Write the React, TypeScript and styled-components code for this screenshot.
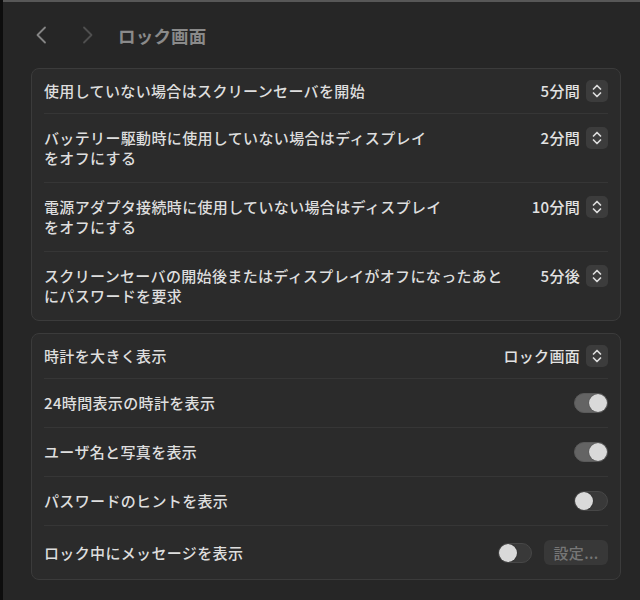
import React from "react";
import styled, { createGlobalStyle } from "styled-components";

const Global = createGlobalStyle`
  html, body {
    margin: 0;
    padding: 0;
    background: #262626;
    height: 100%;
  }
  #root {
    min-height: 100%;
  }
  * { box-sizing: border-box; }
`;

const FONT = `"Noto Sans CJK JP", "Noto Sans", "Liberation Sans", sans-serif`;

const Window = styled.div`
  display: flex;
  width: 640px;
  height: 600px;
  background: #262626;
  font-family: ${FONT};
  overflow: hidden;
`;

const SideEdge = styled.div`
  width: 3px;
  flex: none;
  background: #0d0d0d;
`;

const Main = styled.div`
  flex: 1;
  display: flex;
  flex-direction: column;
  border-top: 2px solid #575757;
  padding: 0 19px 0 28px;
`;

const Header = styled.div`
  height: 66px;
  display: flex;
  align-items: center;
  padding-left: 4px;
`;

const NavButton = styled.span<{ $dim?: boolean }>`
  display: flex;
  align-items: center;
  justify-content: center;
  width: 12px;
  height: 18px;
  color: ${(p) => (p.$dim ? "#4f4f4f" : "#858585")};
  margin-right: ${(p) => (p.$dim ? "24px" : "35px")};
`;

const Title = styled.h1`
  margin: 0;
  font-size: 17.5px;
  font-weight: 700;
  color: #8a8a8a;
  letter-spacing: 0.2px;
`;

const Cards = styled.div`
  display: flex;
  flex-direction: column;
  gap: 12px;
`;

const Card = styled.section`
  background: #2b2b2b;
  border: 1px solid #3b3b3b;
  border-radius: 8px;
  display: flex;
  flex-direction: column;
`;

const Separator = styled.div`
  height: 1px;
  margin: 0 12px;
  background: #363636;
`;

const Row = styled.div<{ $pad: number; $align?: string }>`
  display: flex;
  align-items: ${(p) => p.$align || "center"};
  justify-content: space-between;
  padding: ${(p) => p.$pad}px 12px ${(p) => p.$pad}px 12px;
  gap: 16px;
`;

const Label = styled.div`
  font-size: 15px;
  line-height: 20px;
  letter-spacing: 0.35px;
  color: #dedede;
  font-weight: 500;
`;

const Controls = styled.div`
  display: flex;
  align-items: center;
  gap: 12px;
  flex: none;
`;

const PopUp = styled.div`
  display: flex;
  align-items: center;
  gap: 6px;
  height: 20px;
`;

const Value = styled.span`
  font-size: 15px;
  line-height: 20px;
  letter-spacing: 0.3px;
  color: #e2e2e2;
  font-weight: 500;
`;

const StepperBox = styled.span`
  width: 22px;
  height: 22px;
  border-radius: 5px;
  background: #3c3c3c;
  display: flex;
  align-items: center;
  justify-content: center;
`;

const Track = styled.span<{ $on: boolean }>`
  position: relative;
  display: block;
  width: 34px;
  height: 20px;
  border-radius: 10px;
  background: ${(p) => (p.$on ? "#646464" : "#393939")};
  border: 1px solid ${(p) => (p.$on ? "#5a5a5a" : "#474747")};
`;

const Knob = styled.span<{ $on: boolean }>`
  position: absolute;
  top: 0px;
  left: ${(p) => (p.$on ? "14px" : "0px")};
  width: 18px;
  height: 18px;
  border-radius: 50%;
  background: #d9d9d9;
  box-shadow: 0 0 1px rgba(0, 0, 0, 0.6);
`;

const Button = styled.span`
  display: flex;
  align-items: center;
  justify-content: center;
  width: 64px;
  height: 25px;
  border-radius: 6px;
  background: #383838;
  color: #767676;
  font-size: 15px;
  letter-spacing: 0.3px;
  font-weight: 500;
`;

const Chevron = ({ dir }: { dir: "left" | "right" }) => (
  <svg width="12" height="18" viewBox="0 0 12 18" fill="none">
    <path
      d={dir === "left" ? "M10 1.5 L2.5 9 L10 16.5" : "M2 1.5 L9.5 9 L2 16.5"}
      stroke="currentColor"
      strokeWidth="1.8"
      strokeLinecap="round"
      strokeLinejoin="round"
    />
  </svg>
);

const Stepper = () => (
  <StepperBox>
    <svg width="12" height="16" viewBox="0 0 12 16" fill="none">
      <path
        d="M2.5 6 L6 2.5 L9.5 6 M2.5 10 L6 13.5 L9.5 10"
        stroke="#dcdcdc"
        strokeWidth="1.7"
        strokeLinecap="round"
        strokeLinejoin="round"
      />
    </svg>
  </StepperBox>
);

const Toggle = ({ on }: { on: boolean }) => (
  <Track $on={on}>
    <Knob $on={on} />
  </Track>
);

type PopRow = { lines: string[]; value: string };

const popRows: PopRow[] = [
  { lines: ["使用していない場合はスクリーンセーバを開始"], value: "5分間" },
  {
    lines: ["バッテリー駆動時に使用していない場合はディスプレイ", "をオフにする"],
    value: "2分間",
  },
  {
    lines: ["電源アダプタ接続時に使用していない場合はディスプレイ", "をオフにする"],
    value: "10分間",
  },
  {
    lines: ["スクリーンセーバの開始後またはディスプレイがオフになったあと", "にパスワードを要求"],
    value: "5分後",
  },
];

const toggleRows: { label: string; on: boolean; button?: string }[] = [
  { label: "24時間表示の時計を表示", on: true },
  { label: "ユーザ名と写真を表示", on: true },
  { label: "パスワードのヒントを表示", on: false },
  { label: "ロック中にメッセージを表示", on: false, button: "設定..." },
];

export default function App() {
  return (
    <>
      <Global />
      <Window>
        <SideEdge />
        <Main>
          <Header>
            <NavButton>
              <Chevron dir="left" />
            </NavButton>
            <NavButton $dim>
              <Chevron dir="right" />
            </NavButton>
            <Title>ロック画面</Title>
          </Header>
          <Cards>
            <Card>
              {popRows.map((r, i) => (
                <React.Fragment key={i}>
                  {i > 0 && <Separator />}
                  <Row $pad={r.lines.length > 1 ? 14 : 12} $align={r.lines.length > 1 ? "flex-start" : "center"}>
                    <Label>
                      {r.lines.map((l, j) => (
                        <React.Fragment key={j}>
                          {j > 0 && <br />}
                          {l}
                        </React.Fragment>
                      ))}
                    </Label>
                    <PopUp>
                      <Value>{r.value}</Value>
                      <Stepper />
                    </PopUp>
                  </Row>
                </React.Fragment>
              ))}
            </Card>
            <Card>
              <Row $pad={12}>
                <Label>時計を大きく表示</Label>
                <PopUp>
                  <Value>ロック画面</Value>
                  <Stepper />
                </PopUp>
              </Row>
              {toggleRows.map((r, i) => (
                <React.Fragment key={i}>
                  <Separator />
                  <Row $pad={14}>
                    <Label>{r.label}</Label>
                    <Controls>
                      <Toggle on={r.on} />
                      {r.button && <Button>{r.button}</Button>}
                    </Controls>
                  </Row>
                </React.Fragment>
              ))}
            </Card>
          </Cards>
        </Main>
      </Window>
    </>
  );
}
